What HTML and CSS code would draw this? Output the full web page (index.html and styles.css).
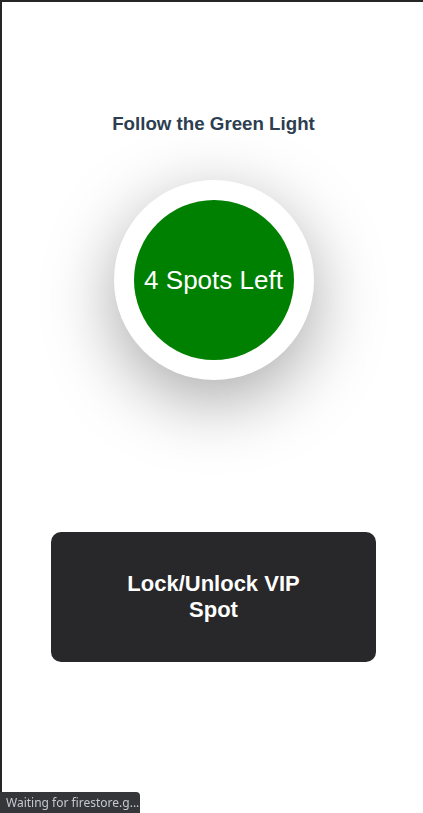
FILE: index.html
```html
<!DOCTYPE html>
<html lang="en">
<head>
<meta charset="utf-8">
<title>Follow the Green Light</title>
<link rel="stylesheet" href="styles.css">
</head>
<body>
  <div class="frame">
    <main class="app">
      <h3 class="title">Follow the Green Light</h3>
      <div class="light-ring">
        <div class="light">4 Spots Left</div>
      </div>
      <button class="vip-button" type="button">Lock/Unlock VIP Spot</button>
    </main>
  </div>
  <div class="status-bubble">Waiting for firestore.g...</div>
</body>
</html>
```
FILE: styles.css
```css
html, body {
  margin: 0;
  padding: 0;
  background: #ffffff;
}

body {
  font-family: "Liberation Sans", Arial, sans-serif;
  overflow: hidden;
}

.frame {
  box-sizing: border-box;
  height: 813px;
  border-top: 2px solid #262626;
  border-left: 2px solid #262626;
  padding-left: 2px;
}

.app {
  display: flex;
  flex-direction: column;
  align-items: center;
  padding-top: 111px;
}

.title {
  margin: 0;
  font-size: 18.72px;
  line-height: 22px;
  font-weight: bold;
  color: #2c3e50;
}

.light-ring {
  margin-top: 45px;
  width: 200px;
  height: 200px;
  border-radius: 50%;
  background: #ffffff;
  box-shadow: 0 20px 70px rgba(0, 0, 0, 0.35);
  display: flex;
  align-items: center;
  justify-content: center;
}

.light {
  width: 160px;
  height: 160px;
  border-radius: 50%;
  background: #008000;
  color: #ffffff;
  font-size: 26px;
  display: flex;
  align-items: center;
  justify-content: center;
  white-space: nowrap;
}

.vip-button {
  margin-top: 152px;
  width: 325px;
  height: 130px;
  border: none;
  border-radius: 10px;
  background: #28282a;
  color: #ffffff;
  font-family: "Liberation Sans", Arial, sans-serif;
  font-size: 22px;
  line-height: 26px;
  font-weight: bold;
  padding: 0 60px;
}

.status-bubble {
  position: fixed;
  left: 0;
  bottom: 0;
  width: 140px;
  height: 21px;
  box-sizing: border-box;
  padding: 2px 0 0 6px;
  background: #35363a;
  color: #c4c9d0;
  font-family: "Noto Sans", "DejaVu Sans", sans-serif;
  font-size: 12px;
  line-height: 17px;
  border-top-right-radius: 4px;
  white-space: nowrap;
  overflow: hidden;
}
```
